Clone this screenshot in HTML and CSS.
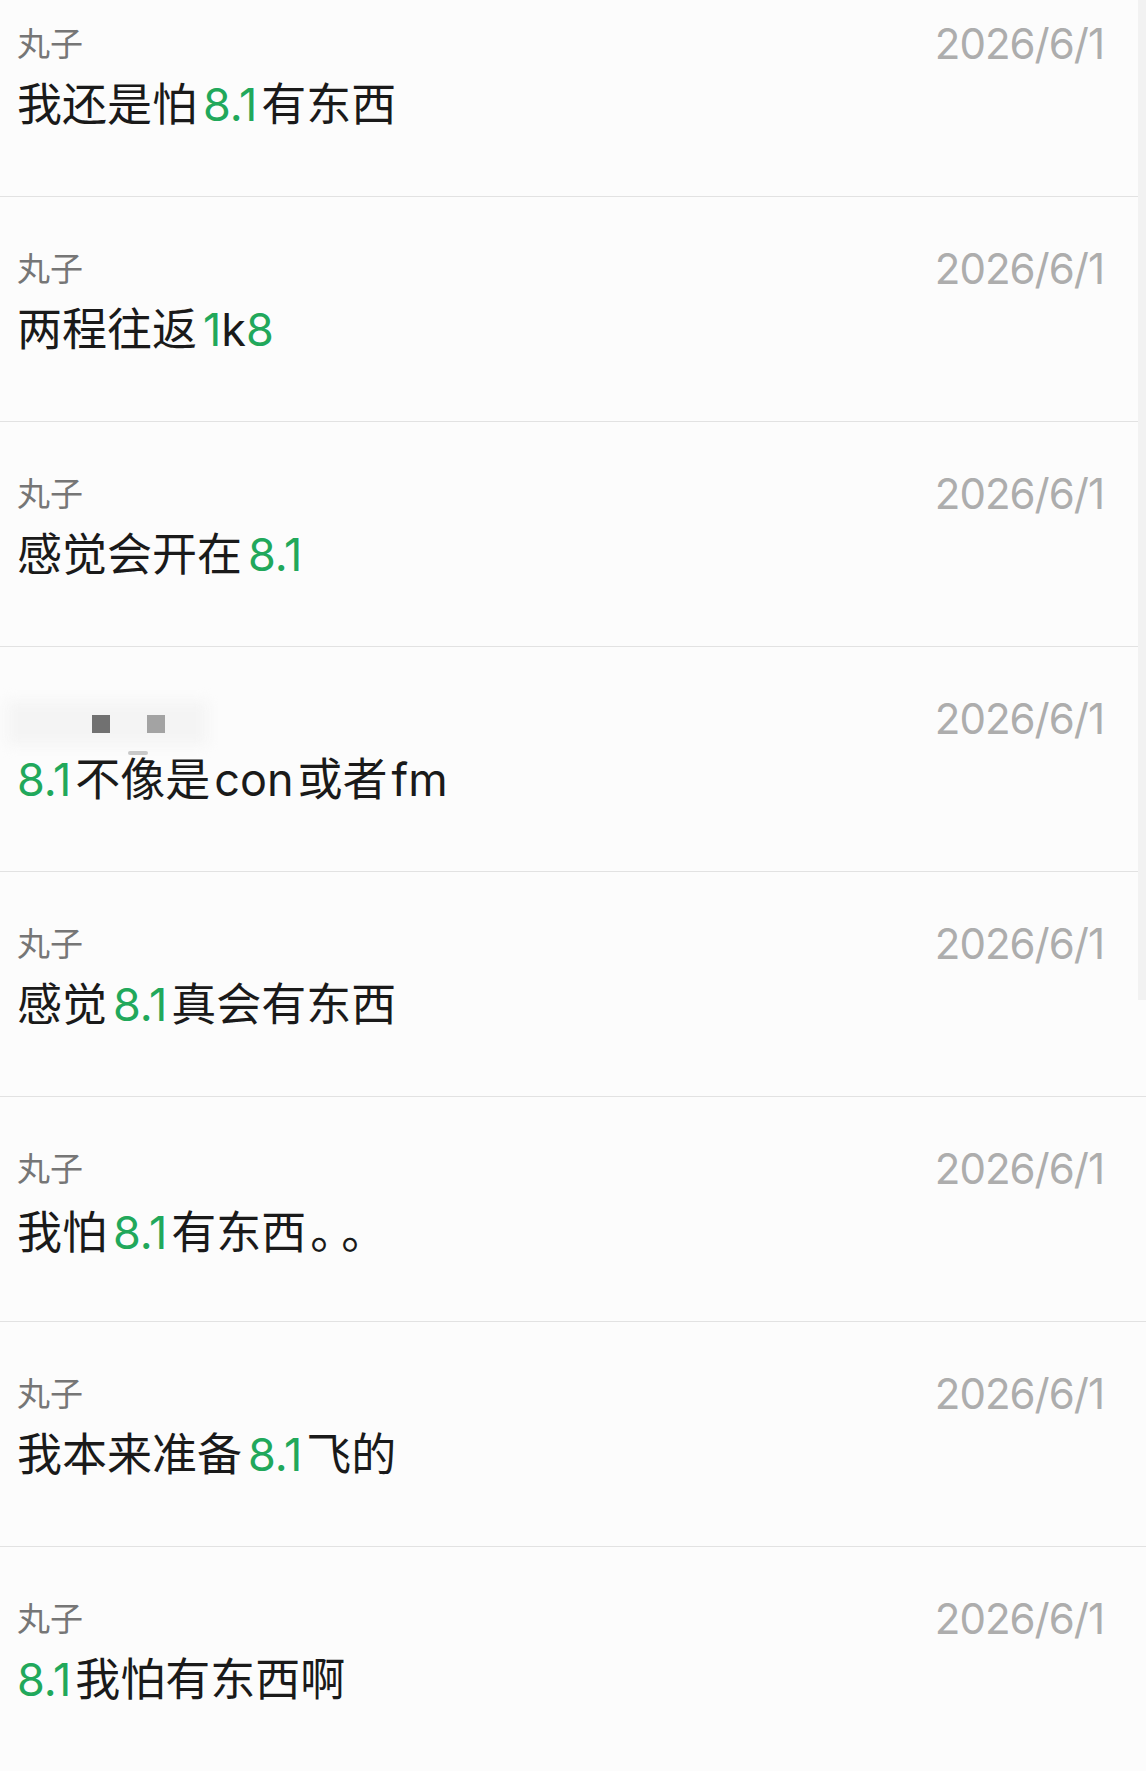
FILE: index.html
```html
<!DOCTYPE html>
<html lang="zh-CN">
<head>
  <meta charset="UTF-8">
  <meta name="viewport" content="width=device-width, initial-scale=1.0">
  <title>聊天记录</title>
  <link rel="stylesheet" href="styles.css">
</head>
<body>
  <!-- 搜索结果列表 -->
  <div class="list">
    <div class="item">
      <div class="head"><span class="name">丸子</span><span class="date">2026/6/1</span></div>
      <div class="text">我还是怕<span class="num">8.1</span>有东西</div>
    </div>
    <div class="item">
      <div class="head"><span class="name">丸子</span><span class="date">2026/6/1</span></div>
      <div class="text">两程往返<span class="num tight">1</span>k<span class="num tight">8</span></div>
    </div>
    <div class="item">
      <div class="head"><span class="name">丸子</span><span class="date">2026/6/1</span></div>
      <div class="text">感觉会开在<span class="num">8.1</span></div>
    </div>
    <div class="item">
      <div class="head">
        <span class="name blurred">
          <i class="px px-c"></i><i class="px px-a"></i><i class="px px-b"></i><i class="px px-d"></i>
        </span>
        <span class="date">2026/6/1</span>
      </div>
      <div class="text"><span class="num first">8.1</span>不像是<span class="lat">con</span>或者<span class="lat">fm</span></div>
    </div>
    <div class="item">
      <div class="head"><span class="name">丸子</span><span class="date">2026/6/1</span></div>
      <div class="text">感觉<span class="num">8.1</span>真会有东西</div>
    </div>
    <div class="item">
      <div class="head"><span class="name">丸子</span><span class="date">2026/6/1</span></div>
      <div class="text">我怕<span class="num">8.1</span>有东西<span class="punct">。。</span></div>
    </div>
    <div class="item">
      <div class="head"><span class="name">丸子</span><span class="date">2026/6/1</span></div>
      <div class="text">我本来准备<span class="num">8.1</span>飞的</div>
    </div>
    <div class="item">
      <div class="head"><span class="name">丸子</span><span class="date">2026/6/1</span></div>
      <div class="text"><span class="num first">8.1</span>我怕有东西啊</div>
    </div>
  </div>

  <!-- 滚动条 -->
  <div class="scrollbar"></div>
</body>
</html>
```

FILE: styles.css
```css
/* 基本样式 */
* { box-sizing: border-box; }
html, body { height: 100%; }
body {
  margin: 0;
  background: #fcfcfc;
  font-family: "Inter", "Noto Sans CJK SC", sans-serif;
  overflow: hidden;
  position: relative;
}

/* 列表 */
.list { margin-top: -28px; }
.item {
  height: 225px;
  padding: 46px 42px 0 17px;
  border-bottom: 1.5px solid #e2e2e2;
}
.head {
  display: flex;
  justify-content: space-between;
  align-items: flex-start;
  height: 48px;
}
.name {
  font-family: "Noto Sans CJK SC", sans-serif;
  font-size: 33px;
  line-height: 48px;
  color: #767676;
}
.date {
  font-family: "Inter", sans-serif;
  font-size: 42px;
  line-height: 52px;
  letter-spacing: -1px;
  color: #adadad;
}
.text {
  margin-top: 9px;
  font-size: 45px;
  line-height: 60px;
  color: #1a1a1a;
}
.num { color: #21a85b; margin: 0 4px 0 6px; }
.num.first { margin-left: 0; }
.num.tight { margin: 0 0 0 6px; }
.num.tight + .num.tight { margin: 0; }
.lat { margin: 0 4px; }
.punct {
  font-family: "Noto Sans CJK SC", sans-serif;
  text-spacing-trim: space-all;
  letter-spacing: -14px;
  margin-left: 4px;
}

/* 打码的名字 */
.name.blurred {
  position: relative;
  display: block;
  width: 200px;
  height: 48px;
}
.px {
  position: absolute;
  display: block;
  width: 18px;
  height: 18px;
}
.px-c { left: -10px; top: 8px; width: 200px; height: 44px; background: #f4f4f4; filter: blur(6px); }
.px-a { left: 75px; top: 22px; background: #717171; }
.px-b { left: 130px; top: 22px; background: #a3a3a3; }
.px-d { left: 111px; top: 58px; width: 20px; height: 4px; background: #c8c8c8; border-radius: 2px; }

/* 右侧滚动条 */
.scrollbar {
  position: absolute;
  top: 0;
  right: 0;
  width: 8px;
  height: 1000px;
  background: #f2f2f2;
}
```
